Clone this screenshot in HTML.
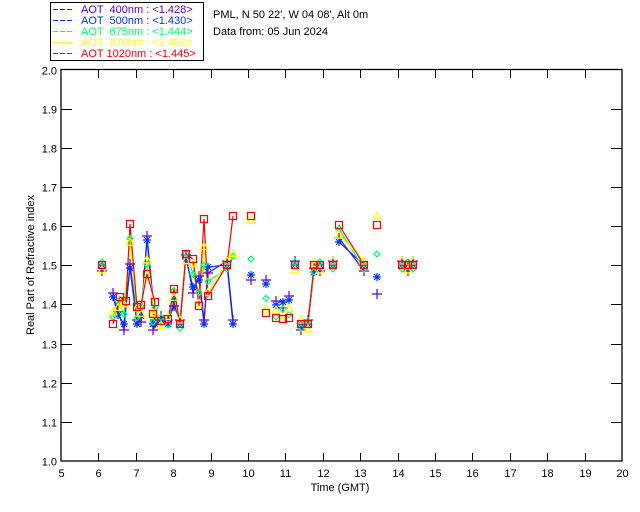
<!DOCTYPE html>
<html><head><meta charset="utf-8"><style>
html,body{margin:0;padding:0;background:#fff;width:640px;height:512px;overflow:hidden}
svg{display:block}
text{font-family:"Liberation Sans",sans-serif;font-size:11px}
</style></head><body>
<svg id="s" width="640" height="512" xmlns="http://www.w3.org/2000/svg">
<rect x="50.5" y="2.5" width="153" height="58" fill="none" stroke="#000" stroke-width="1"/>
<g stroke-width="1">
<line x1="53" y1="9.5" x2="73" y2="9.5" stroke="#6600cc" stroke-dasharray="5,2"/>
<line x1="53" y1="20.5" x2="73" y2="20.5" stroke="#0033ff" stroke-dasharray="5,2"/>
<line x1="53" y1="31.5" x2="73" y2="31.5" stroke="#00ff66" stroke-dasharray="5,2"/>
<line x1="53" y1="42.5" x2="73" y2="42.5" stroke="#ffff00" stroke-dasharray="5,2"/>
<line x1="53" y1="53.5" x2="73" y2="53.5" stroke="#ff0000" stroke-dasharray="5,2"/>
</g>
<text x="81" y="13" fill="#6600cc" xml:space="preserve">AOT  400nm : &lt;1.428&gt;</text>
<text x="81" y="24" fill="#0033ff" xml:space="preserve">AOT  500nm : &lt;1.430&gt;</text>
<text x="81" y="35" fill="#00ff66" xml:space="preserve">AOT  675nm : &lt;1.444&gt;</text>
<text x="81" y="46" fill="#ffff00" xml:space="preserve">AOT  870nm : &lt;1.450&gt;</text>
<text x="81" y="57" fill="#ff0000" xml:space="preserve">AOT 1020nm : &lt;1.445&gt;</text>
<text x="213" y="18">PML, N 50 22', W 04 08', Alt 0m</text>
<text x="213" y="35">Data from: 05 Jun 2024</text>
<rect x="61" y="69.5" width="561" height="391.5" fill="none" stroke="#000" stroke-width="1.3"/>
<g id="ax" stroke="#000" stroke-width="1"></g>
<g id="lab"></g>
<text x="340" y="491" text-anchor="middle">Time (GMT)</text>
<text transform="translate(34,265) rotate(-90)" text-anchor="middle">Real Part of Refractive index</text>
<g id="data" fill="none" stroke-width="1.2"></g>
</svg>
<script>
var NS="http://www.w3.org/2000/svg";
function el(p,t,a,txt){var e=document.createElementNS(NS,t);for(var k in a)e.setAttribute(k,a[k]);if(txt!=null)e.textContent=txt;document.getElementById(p).appendChild(e);return e;}
var X=function(v){return 61+(v-5)*37.4},Y=function(v){return 461-(v-1)*391.5};
for(var i=5;i<=20;i++){var x=Math.round(X(i))+.5;
 if(i>5&&i<20){el("ax","line",{x1:x,y1:461,x2:x,y2:453});el("ax","line",{x1:x,y1:70,x2:x,y2:78});}
 el("lab","text",{x:x,y:477,"text-anchor":"middle"},String(i));}
for(var j=0;j<=10;j++){var v=1+j/10,y=Math.round(Y(v))+.5;
 if(j>0&&j<10){el("ax","line",{x1:61,y1:y,x2:72,y2:y});el("ax","line",{x1:622,y1:y,x2:611,y2:y});}
 el("lab","text",{x:57,y:y+4,"text-anchor":"end"},v.toFixed(1));}
var red=[[102,265],[113,324],[120,297],[126,301],[130,224],[137,307],[141,305],[147,274],[155,302],[153,314],[161,321],[168,319],[174,289],[180,324],[186,254],[193,259],[199,306],[204,219],[208,296],[227,265],[233,216],[251,216],[266,313],[276,318],[283,319],[289,318],[295,265],[301,324],[308,324],[314,265],[320,265],[333,265],[339,225],[364,265],[377,225],[402,265],[408,265],[413,265]];
var redLines=[[1,19],[19,20],[27,30],[32,33]];
function poly(pts,col,segs){segs.forEach(function(s){var d="";for(var i=s[0];i<=s[1];i++)d+=(i==s[0]?"M":"L")+pts[i][0]+","+pts[i][1];el("data","path",{d:d,stroke:col});});}
var blue=[[102,265],[113,297],[118,315],[124,324],[130,268],[137,324],[141,316],[147,240],[155,324],[153,324],[161,320],[168,324],[174,300],[180,324],[186,259],[193,287],[199,280],[204,324],[208,267],[227,265],[233,324],[251,275],[266,284],[276,305],[283,302],[289,300],[295,265],[301,324],[308,324],[314,272],[320,265],[333,265],[339,242],[364,265],[377,277],[402,265],[408,265],[413,265]];
var purple=blue.map(function(p,i){return [p[0],p[1]+(i%3==0?6:-4)]});
var green=blue.map(function(p,i){return [p[0],(p[1]*0.4+red[i][1]*0.6)+(i%2?4:-3)]});
var yellow=blue.map(function(p,i){return [p[0],(p[1]*0.3+red[i][1]*0.7)+(i%2?-4:5)]});
purple[21]=[251,280];green[21]=[251,259];yellow[21]=[251,220];
purple[34]=[377,294];green[34]=[377,254];yellow[34]=[377,216];
poly(purple,"#6600cc",redLines);poly(blue,"#0033ff",redLines);poly(green,"#00ff66",redLines);poly(yellow,"#ffff00",redLines);poly(red,"#ff0000",redLines);
purple.forEach(function(p){el("data","path",{d:"M"+(p[0]-5)+","+p[1]+"h10M"+p[0]+","+(p[1]-5)+"v10",stroke:"#6600cc"});});
blue.forEach(function(p){el("data","path",{d:"M"+(p[0]-4)+","+p[1]+"h8M"+p[0]+","+(p[1]-4)+"v8M"+(p[0]-3)+","+(p[1]-3)+"l6,6M"+(p[0]+3)+","+(p[1]-3)+"l-6,6",stroke:"#0033ff"});});
green.forEach(function(p){el("data","path",{d:"M"+p[0]+","+(p[1]-3)+"l3,3l-3,3l-3,-3z",stroke:"#00ff66"});});
yellow.forEach(function(p){el("data","path",{d:"M"+p[0]+","+(p[1]-4)+"l4,7h-8z",stroke:"#ffff00"});});
red.forEach(function(p){el("data","rect",{x:p[0]-3.5,y:p[1]-3.5,width:7,height:7,stroke:"#ff0000"});});
</script>
</body></html>
